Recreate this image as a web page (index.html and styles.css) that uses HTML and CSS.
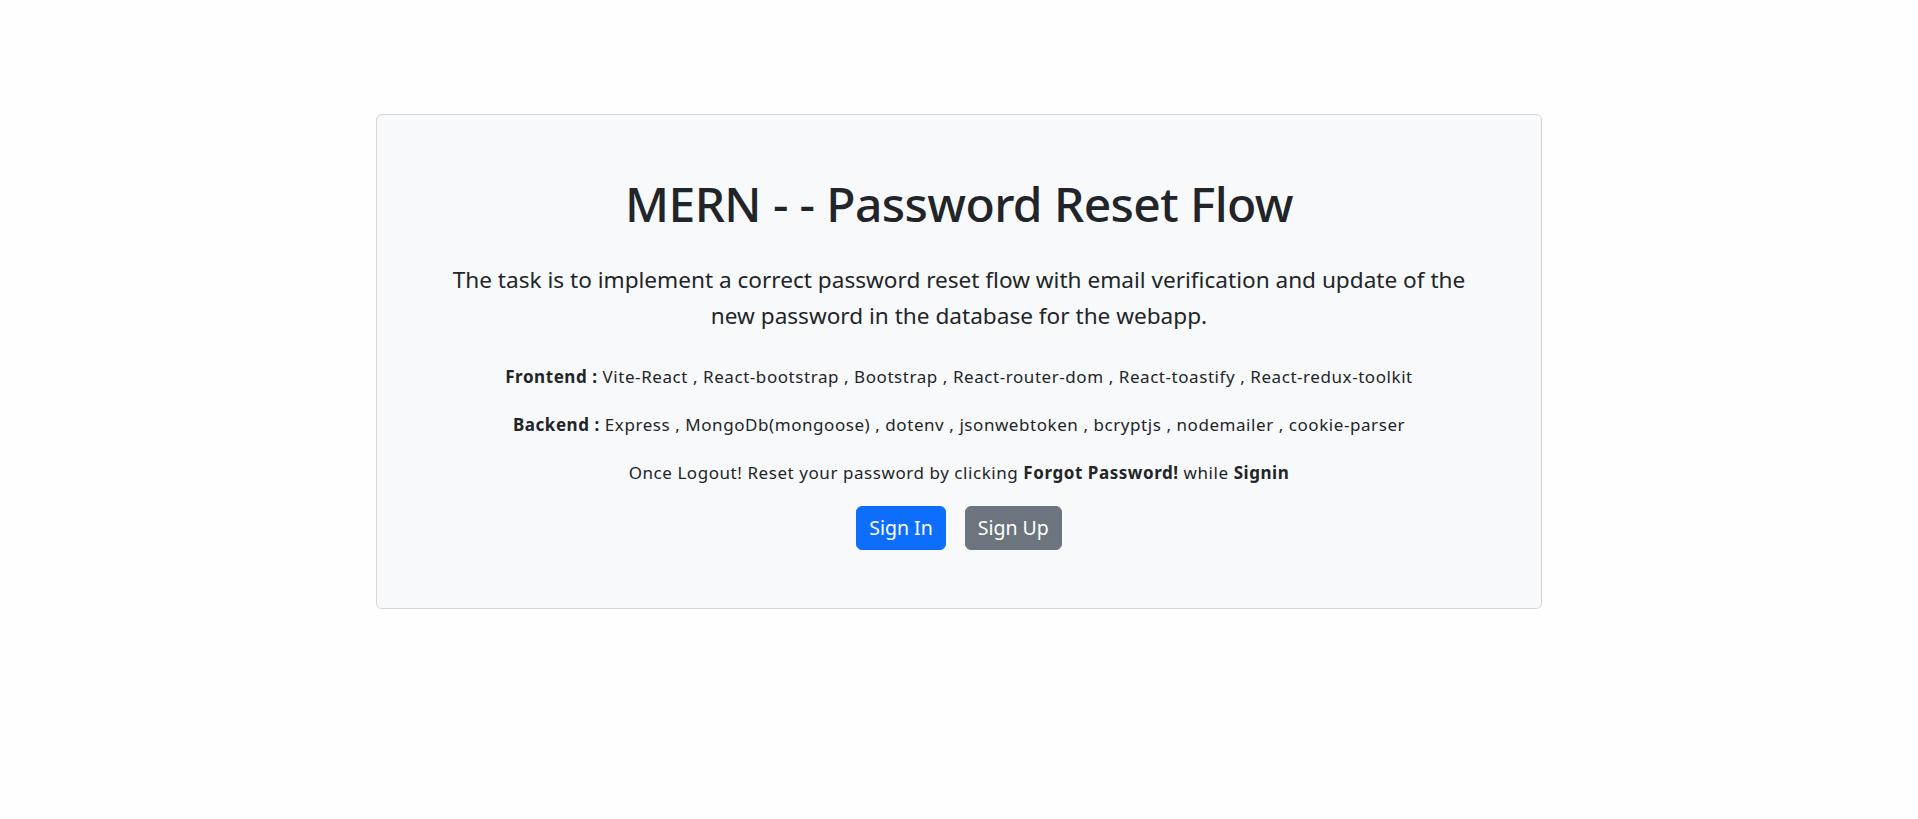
FILE: index.html
```html
<!DOCTYPE html>
<html lang="en">
<head>
<meta charset="utf-8">
<title>MERN - Password Reset Flow</title>
<link rel="stylesheet" href="styles.css">
</head>
<body>
<main class="page">
  <section class="card">
    <h1 class="title">MERN - - Password Reset Flow</h1>
    <p class="lead">The task is to implement a correct password reset flow with email verification and update of the new password in the database for the webapp.</p>
    <p class="info"><b>Frontend :</b> Vite-React , React-bootstrap , Bootstrap , React-router-dom , React-toastify , React-redux-toolkit</p>
    <p class="info"><b>Backend :</b> Express , MongoDb(mongoose) , dotenv , jsonwebtoken , bcryptjs , nodemailer , cookie-parser</p>
    <p class="info">Once Logout! Reset your password by clicking <b>Forgot Password!</b> while <b>Signin</b></p>
    <div class="actions">
      <a class="btn btn-primary" href="#">Sign In</a>
      <a class="btn btn-secondary" href="#">Sign Up</a>
    </div>
  </section>
</main>
</body>
</html>
```

FILE: styles.css
```css
* { box-sizing: border-box; }

html, body {
  margin: 0;
  padding: 0;
  background: #fefefe;
}

body {
  font-family: "Noto Sans", "Open Sans", sans-serif;
  color: #212529;
}

.page {
  display: flex;
  justify-content: center;
  padding-top: 114px;
}

.card {
  width: 1166px;
  background: #f8f9fa;
  border: 1px solid #d3d5d8;
  border-radius: 6px;
  padding: 58px 48px 58px;
  display: flex;
  flex-direction: column;
  align-items: center;
  text-align: center;
}

.title {
  margin: 0;
  font-size: 48px;
  line-height: 62px;
  font-weight: 500;
  letter-spacing: -0.6px;
}

.lead {
  margin: 27px 0 0;
  max-width: 1040px;
  font-size: 22.6px;
  line-height: 36px;
  font-weight: 400;
}

.info {
  margin: 31px 0 0;
  font-size: 17px;
  line-height: 24px;
  letter-spacing: 0.56px;
}

.info + .info {
  margin-top: 24px;
}

.info b {
  font-weight: 700;
}

.actions {
  display: flex;
  gap: 19px;
  margin-top: 21px;
}

.btn {
  display: inline-block;
  padding: 6px 12px;
  font-size: 19.5px;
  line-height: 30px;
  color: #fff;
  text-decoration: none;
  border-radius: 6px;
  border: 1px solid transparent;
}

.btn-primary {
  background: #0d6efd;
  border-color: #0d6efd;
}

.btn-secondary {
  background: #6c757d;
  border-color: #6c757d;
}
```
